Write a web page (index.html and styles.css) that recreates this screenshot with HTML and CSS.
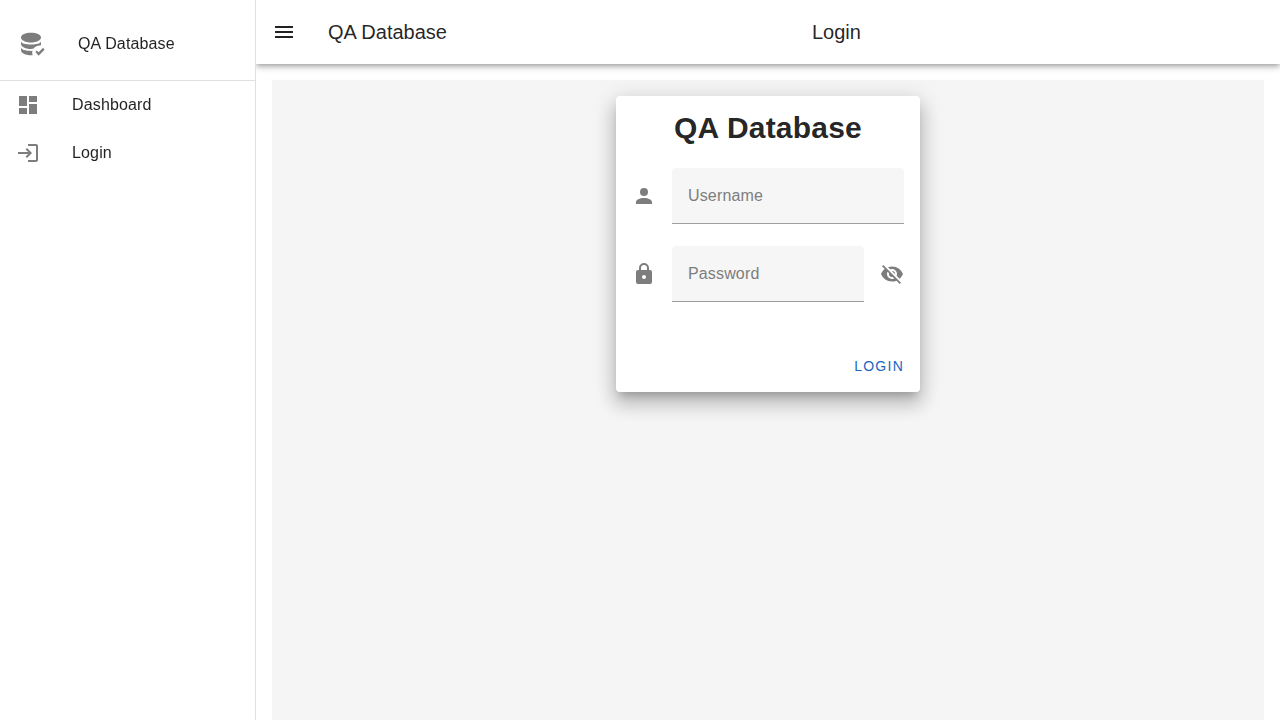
FILE: index.html
```html
<!DOCTYPE html>
<html lang="en">
<head>
<meta charset="utf-8">
<title>QA Database</title>
<link rel="stylesheet" href="styles.css">
</head>
<body>
<div class="app">
  <nav class="drawer">
    <div class="brand">
      <svg class="icon icon-brand" viewBox="0 0 24 24"><path d="M12 3C7.58 3 4 4.6 4 6.8S7.58 10.8 12 10.8 20 9 20 6.8 16.42 3 12 3M4 9.8V12C4 14.21 7.58 16 12 16C12.65 16 13.28 15.96 13.88 15.89C14.93 14.16 16.83 13.1 19 13.1C19.31 13.1 19.5 13.1 19.7 13.13C19.9 12.8 20 12.4 20 12V9.8C20 11.4 16.42 12.4 12 12.4S4 11.4 4 9.8M4 14.8V17C4 19.21 7.58 21 12 21C12.46 21 12.9 21 13.33 20.94C13.12 20.33 13 19.68 13 19C13 18.5 13.06 17.9 13.2 17.45C12.8 17.5 12.4 17.5 12 17.5C7.58 17.5 4 16.4 4 14.8M18.08 21.42L15.5 18.42L16.66 17.25L18.08 18.67L21.68 15.09L22.83 16.5Z"/></svg>
      <span>QA Database</span>
    </div>
    <a class="item">
      <svg class="icon" viewBox="0 0 24 24"><path d="M13,3V9H21V3M13,21H21V11H13M3,21H11V15H3M3,13H11V3H3V13Z"/></svg>
      <span>Dashboard</span>
    </a>
    <a class="item">
      <svg class="icon" viewBox="0 0 24 24"><path d="M11 7L9.6 8.4L12.2 11H2V13H12.2L9.6 15.6L11 17L16 12L11 7M20 19H12V21H20C21.1 21 22 20.1 22 19V5C22 3.9 21.1 3 20 3H12V5H20V19Z"/></svg>
      <span>Login</span>
    </a>
  </nav>
  <div class="page">
    <header class="bar">
      <svg class="icon icon-dark" viewBox="0 0 24 24"><path d="M3,6H21V8H3V6M3,11H21V13H3V11M3,16H21V18H3V16Z"/></svg>
      <span class="bar-title">QA Database</span>
      <span class="bar-page">Login</span>
    </header>
    <main class="content">
      <form class="card">
        <h1 class="card-title">QA Database</h1>
        <div class="field-row">
          <svg class="icon" viewBox="0 0 24 24"><path d="M12,4A4,4 0 0,1 16,8A4,4 0 0,1 12,12A4,4 0 0,1 8,8A4,4 0 0,1 12,4M12,14C16.42,14 20,15.79 20,18V20H4V18C4,15.79 7.58,14 12,14Z"/></svg>
          <label class="field"><span>Username</span></label>
        </div>
        <div class="field-row">
          <svg class="icon" viewBox="0 0 24 24"><path d="M12,17A2,2 0 0,0 14,15C14,13.89 13.1,13 12,13A2,2 0 0,0 10,15A2,2 0 0,0 12,17M18,8A2,2 0 0,1 20,10V20A2,2 0 0,1 18,22H6A2,2 0 0,1 4,20V10C4,8.89 4.9,8 6,8H7V6A5,5 0 0,1 12,1A5,5 0 0,1 17,6V8H18M12,3A3,3 0 0,0 9,6V8H15V6A3,3 0 0,0 12,3Z"/></svg>
          <label class="field"><span>Password</span></label>
          <svg class="icon" viewBox="0 0 24 24"><path d="M11.83,9L15,12.16C15,12.11 15,12.05 15,12A3,3 0 0,0 12,9C11.94,9 11.89,9 11.83,9M7.53,9.8L9.08,11.35C9.03,11.56 9,11.77 9,12A3,3 0 0,0 12,15C12.22,15 12.44,14.97 12.65,14.92L14.2,16.47C13.53,16.8 12.79,17 12,17A5,5 0 0,1 7,12C7,11.21 7.2,10.47 7.53,9.8M2,4.27L4.28,6.55L4.73,7C3.08,8.3 1.78,10 1,12C2.73,16.39 7,19.5 12,19.5C13.55,19.5 15.03,19.2 16.38,18.66L16.81,19.08L19.73,22L21,20.73L3.27,3M12,7A5,5 0 0,1 17,12C17,12.64 16.87,13.26 16.64,13.82L19.57,16.75C21.07,15.5 22.27,13.86 23,12C21.27,7.61 17,4.5 12,4.5C10.6,4.5 9.26,4.75 8,5.2L10.17,7.35C10.74,7.13 11.35,7 12,7Z"/></svg>
        </div>
        <div class="actions"><button class="login" type="button">LOGIN</button></div>
      </form>
    </main>
  </div>
</div>
</body>
</html>
```
FILE: styles.css
```css
* { box-sizing: border-box; }
body {
  margin: 0;
  font-family: "Liberation Sans", Arial, sans-serif;
  font-size: 16px;
  line-height: 24px;
  color: rgba(0, 0, 0, .87);
  background: #fff;
}
.app { display: flex; height: 100vh; overflow: hidden; }
.icon { width: 24px; height: 24px; flex: none; fill: #7d7d7d; }
.icon-dark { fill: #212121; }
.drawer {
  width: 256px;
  flex: none;
  border-right: 1px solid #e0e0e0;
  letter-spacing: .009375em;
  will-change: transform;
}
.brand {
  display: flex;
  align-items: center;
  gap: 32px;
  height: 81px;
  padding: 8px 16px 0;
  border-bottom: 1px solid #e0e0e0;
}
.icon-brand { width: 30px; height: 30px; }
.item {
  display: flex;
  align-items: center;
  gap: 32px;
  height: 48px;
  padding: 0 16px;
}
.page { flex: 1; display: flex; flex-direction: column; }
.bar {
  display: grid;
  grid-template-columns: 24px 1fr 468px;
  column-gap: 32px;
  align-items: center;
  height: 64px;
  flex: none;
  padding-left: 16px;
  font-size: 20px;
  background: #fff;
  box-shadow: 0 2px 4px -1px rgba(0,0,0,.2), 0 4px 5px 0 rgba(0,0,0,.14), 0 1px 10px 0 rgba(0,0,0,.12);
  clip-path: inset(0 0 -20px 0);
}
.content {
  flex: 1;
  margin: 16px 16px 0;
  padding-top: 16px;
  background: #f5f5f5;
}
.card {
  width: 304px;
  height: 296px;
  margin: 0 auto;
  padding: 8px 16px;
  display: flex;
  flex-direction: column;
  gap: 22px;
  background: #fff;
  border-radius: 4px;
  box-shadow: 0 7px 8px -4px rgba(0,0,0,.2), 0 12px 17px 2px rgba(0,0,0,.14), 0 5px 22px 4px rgba(0,0,0,.12);
}
.card-title {
  margin: 0 0 -6px;
  height: 48px;
  line-height: 48px;
  text-align: center;
  font-size: 30px;
  font-weight: 700;
  letter-spacing: .2px;
}
.field-row { display: flex; align-items: center; gap: 16px; }
.field {
  flex: 1;
  display: flex;
  align-items: center;
  height: 56px;
  padding: 0 16px;
  background: #f6f6f6;
  border-bottom: 1px solid #9e9e9e;
  border-radius: 4px 4px 0 0;
  color: #7d7d7d;
  letter-spacing: .009375em;
}
.actions { display: flex; justify-content: flex-end; margin-top: auto; }
.login {
  height: 36px;
  padding: 0;
  border: 0;
  background: none;
  color: #1867c0;
  font: 500 14px "Liberation Sans", Arial, sans-serif;
  letter-spacing: .0892857em;
}
```
